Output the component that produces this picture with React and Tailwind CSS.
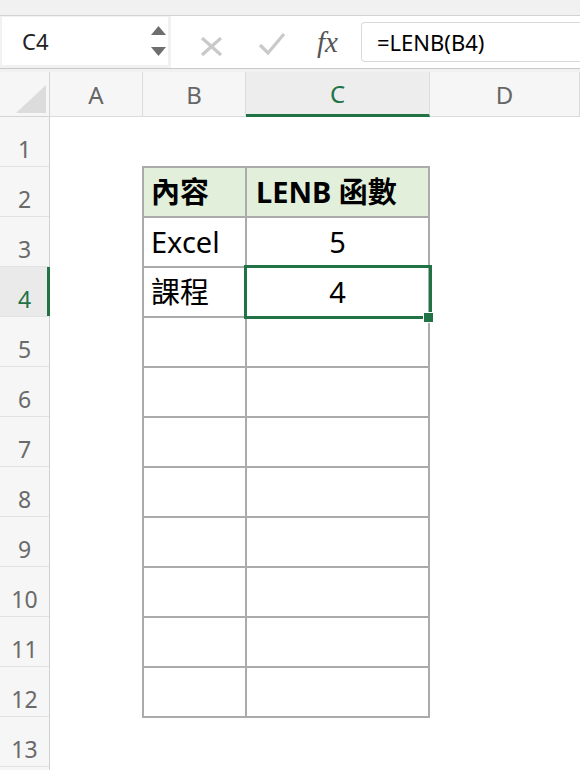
import React from "react";

const ui = { fontFamily: '"Noto Sans", "Liberation Sans", sans-serif' };
const cellFont = { fontFamily: '"Noto Sans", "Noto Sans CJK TC", sans-serif' };

const columns = [
  { name: "A", w: "w-[93px]" },
  { name: "B", w: "w-[103px]" },
  { name: "C", w: "w-[184px]", active: true },
  { name: "D", w: "flex-1" },
];

const tableRows = [
  { b: "內容", c: "LENB 函數", head: true },
  { b: "Excel", c: "5" },
  { b: "課程", c: "4", selected: true },
  ...Array.from({ length: 8 }, () => ({ b: "", c: "" })),
];

function FormulaBar() {
  return (
    <div className="flex flex-col" style={ui}>
      <div className="h-[15px] bg-[#f1f1f1]" />
      <div className="flex h-[53px] border-t border-[#d2d2d2] bg-white">
        {/* Name box */}
        <div className="flex w-[171px] bg-[#f1f1f1] pl-[2px] pr-[3px] pt-[1px] pb-[3px]">
          <div className="flex flex-1 items-center bg-white pl-[20px] pr-[2px]">
            <span className="flex-1 text-[22px] text-[#222]">C4</span>
            <div className="flex flex-col items-center gap-[12px]">
              <svg width="15" height="9" viewBox="0 0 15 9">
                <path d="M7.5 0 L15 9 L0 9 Z" fill="#6e6e6e" />
              </svg>
              <svg width="15" height="9" viewBox="0 0 15 9">
                <path d="M0 0 L15 0 L7.5 9 Z" fill="#6e6e6e" />
              </svg>
            </div>
          </div>
        </div>
        {/* Cancel / enter */}
        <div className="flex items-center pl-[29px] pt-[8px]">
          <svg width="23" height="19" viewBox="0 0 23 19">
            <path d="M2 1 L21 18 M21 1 L2 18" stroke="#c9c9c9" strokeWidth="3.2" />
          </svg>
          <svg className="ml-[35px] -mt-[4px]" width="28" height="24" viewBox="0 0 28 24">
            <path d="M2 13 L10 21 L26 2" stroke="#c9c9c9" strokeWidth="3.2" fill="none" />
          </svg>
        </div>
        <div className="ml-[31px] flex items-center pt-[2px]">
          <span
            className="text-[29px] italic text-[#555]"
            style={{ fontFamily: '"Liberation Serif", "DejaVu Serif", serif' }}
          >
            fx
          </span>
        </div>
        <div className="ml-[23px] mt-[6px] h-[40px] flex-1 rounded-l-[4px] border border-r-0 border-[#d9d9d9] bg-white pl-[15px] flex items-center">
          <span className="text-[22px] text-black">=LENB(B4)</span>
        </div>
      </div>
      <div className="h-[4px] border-t border-[#c9c9c9] bg-[#f1f1f1]" />
    </div>
  );
}

function ColumnHeader() {
  return (
    <div className="flex h-[45px] bg-[#f6f6f6]" style={ui}>
      <div className="relative w-[50px] border-r border-b border-[#d4d4d4]">
        <svg className="absolute left-[16px] top-[13px]" width="30" height="28" viewBox="0 0 30 28">
          <path d="M30 0 L30 28 L0 28 Z" fill="#dcdcdc" />
        </svg>
      </div>
      {columns.map((col) => (
        <div
          key={col.name}
          className={`${col.w} flex items-center justify-center border-r pt-[2px] text-[24px] ${
            col.active
              ? "border-b-[3px] border-r-[#dcdcdc] border-b-[#217346] bg-[#ededed] text-[#217346]"
              : "border-b border-[#dcdcdc] text-[#666]"
          }`}
        >
          {col.name}
        </div>
      ))}
    </div>
  );
}

function RowHeaders() {
  return (
    <div className="flex w-[50px] flex-col border-r border-[#d0d0d0] bg-[#f6f6f6]" style={ui}>
      {Array.from({ length: 13 }, (_, i) => i + 1).map((n) => (
        <div
          key={n}
          className={`relative flex h-[50px] shrink-0 items-center justify-center border-b border-[#e2e2e2] pt-[16px] text-[23px] ${
            n === 4 ? "bg-[#eaeaea] text-[#217346]" : "text-[#6a6a6a]"
          }`}
        >
          {n}
          {n === 4 && <div className="absolute -right-[1px] top-0 h-full w-[3px] bg-[#217346]" />}
        </div>
      ))}
      <div className="h-[50px] shrink-0" />
    </div>
  );
}

function DataTable() {
  return (
    <div className="ml-[92px] mt-[49px] w-[288px] border-l-2 border-t-2 border-[#ababab]" style={cellFont}>
      {tableRows.map((row, i) => (
        <div
          key={i}
          className={`flex h-[50px] ${row.head ? "bg-[#e2efda] font-bold" : "bg-white"} text-[29px] text-black`}
        >
          <div className="flex w-[103px] items-center border-r-2 border-b-2 border-[#ababab] pl-[7px]">
            {row.b}
          </div>
          <div
            className={`relative flex w-[183px] items-center border-r-2 border-b-2 border-[#ababab] ${
              row.head ? "pl-[9px]" : "justify-center"
            } ${row.selected ? "z-10" : ""}`}
          >
            {row.c}
            {row.selected && (
              <>
                <div className="absolute -left-[3px] -top-[3px] -right-[4px] -bottom-[3px] border-[3px] border-[#217346]" />
                <div className="absolute -right-[5px] -bottom-[6px] h-[9px] w-[9px] bg-[#217346] outline outline-1 outline-white" />
              </>
            )}
          </div>
        </div>
      ))}
    </div>
  );
}

export default function App() {
  return (
    <div className="flex h-[770px] w-[580px] flex-col overflow-hidden bg-white">
      <FormulaBar />
      <ColumnHeader />
      <div className="flex flex-1 overflow-hidden">
        <RowHeaders />
        <div className="flex-1">
          <DataTable />
        </div>
      </div>
    </div>
  );
}
